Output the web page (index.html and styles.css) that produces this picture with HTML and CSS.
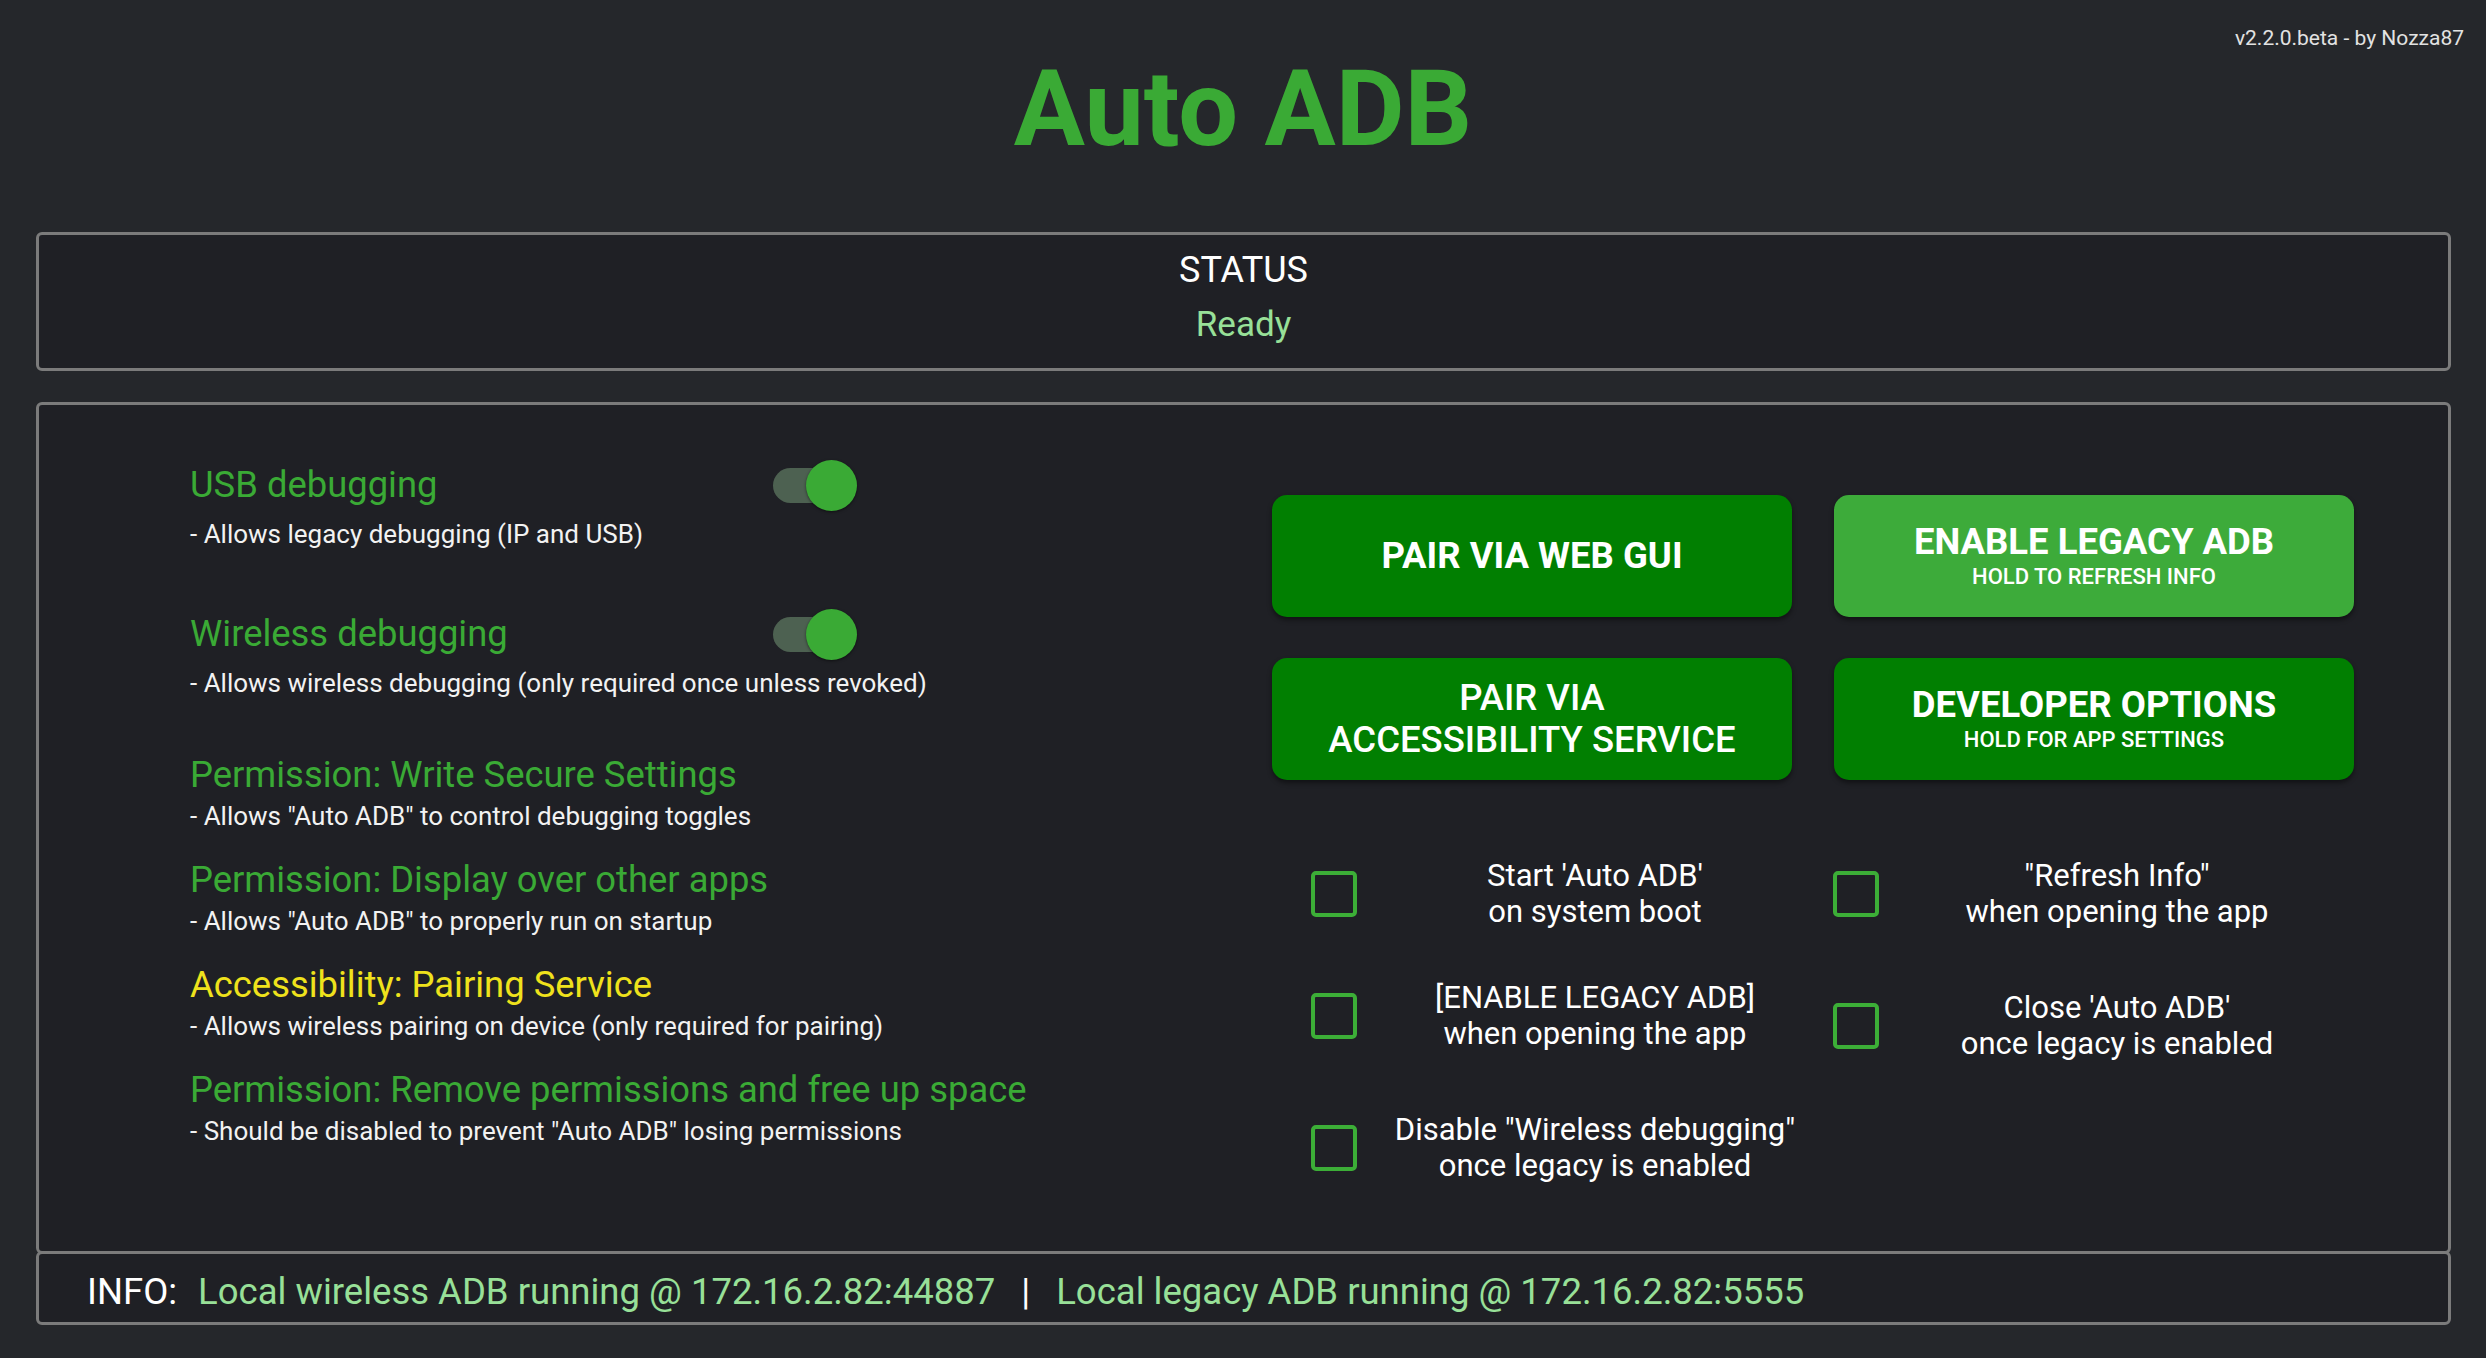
FILE: index.html
```html
<!DOCTYPE html>
<html lang="en">
<head>
<meta charset="utf-8">
<title>Auto ADB</title>
<link rel="stylesheet" href="styles.css">
</head>
<body>
<header class="header">
  <div class="version">v2.2.0.beta - by Nozza87</div>
  <h1 class="title">Auto ADB</h1>
</header>

<section class="status-box">
  <div class="status-label">STATUS</div>
  <div class="status-value">Ready</div>
</section>

<section class="panel">
  <div class="settings">
    <div class="setting setting--toggle">
      <div class="setting-row">
        <div class="setting-title">USB debugging</div>
        <div class="switch"><span class="switch-track"></span><span class="switch-thumb"></span></div>
      </div>
      <div class="setting-desc">- Allows legacy debugging (IP and USB)</div>
    </div>
    <div class="setting setting--toggle">
      <div class="setting-row">
        <div class="setting-title">Wireless debugging</div>
        <div class="switch"><span class="switch-track"></span><span class="switch-thumb"></span></div>
      </div>
      <div class="setting-desc">- Allows wireless debugging (only required once unless revoked)</div>
    </div>
    <div class="setting">
      <div class="setting-title">Permission: Write Secure Settings</div>
      <div class="setting-desc">- Allows "Auto ADB" to control debugging toggles</div>
    </div>
    <div class="setting">
      <div class="setting-title">Permission: Display over other apps</div>
      <div class="setting-desc">- Allows "Auto ADB" to properly run on startup</div>
    </div>
    <div class="setting">
      <div class="setting-title setting-title--warn">Accessibility: Pairing Service</div>
      <div class="setting-desc">- Allows wireless pairing on device (only required for pairing)</div>
    </div>
    <div class="setting">
      <div class="setting-title">Permission: Remove permissions and free up space</div>
      <div class="setting-desc">- Should be disabled to prevent "Auto ADB" losing permissions</div>
    </div>
  </div>

  <div class="actions">
    <div class="buttons">
      <div class="btn btn--dark"><span class="btn-main">PAIR VIA WEB GUI</span></div>
      <div class="btn btn--light"><span class="btn-main">ENABLE LEGACY ADB</span><span class="btn-sub">HOLD TO REFRESH INFO</span></div>
      <div class="btn btn--dark"><span class="btn-main btn-main--medium">PAIR VIA</span><span class="btn-main btn-main--medium">ACCESSIBILITY SERVICE</span></div>
      <div class="btn btn--dark"><span class="btn-main">DEVELOPER OPTIONS</span><span class="btn-sub">HOLD FOR APP SETTINGS</span></div>
    </div>

    <div class="checks">
      <div class="check">
        <span class="check-box"></span>
        <span class="check-text">Start 'Auto ADB'<br>on system boot</span>
      </div>
      <div class="check">
        <span class="check-box"></span>
        <span class="check-text">"Refresh Info"<br>when opening the app</span>
      </div>
      <div class="check check--top">
        <span class="check-box"></span>
        <span class="check-text">[ENABLE LEGACY ADB]<br>when opening the app</span>
      </div>
      <div class="check check--bottom">
        <span class="check-box"></span>
        <span class="check-text">Close 'Auto ADB'<br>once legacy is enabled</span>
      </div>
      <div class="check">
        <span class="check-box"></span>
        <span class="check-text">Disable "Wireless debugging"<br>once legacy is enabled</span>
      </div>
    </div>
  </div>
</section>

<footer class="info-bar">
  <span class="info-label">INFO:</span>
  <span class="info-text">Local wireless ADB running @ 172.16.2.82:44887</span>
  <span class="info-sep">|</span>
  <span class="info-text info-text--last">Local legacy ADB running @ 172.16.2.82:5555</span>
</footer>
</body>
</html>
```

FILE: styles.css
```css
html, body {
  margin: 0;
  padding: 0;
}

body {
  width: 2486px;
  height: 1358px;
  overflow: hidden;
  background: #25272b;
  color: #ffffff;
  font-family: Roboto, "Liberation Sans", sans-serif;
}

/* Header */
.header {
  display: flex;
  flex-direction: column;
}

.version {
  align-self: flex-end;
  padding: 25px 22px 0 0;
  font-size: 21px;
  line-height: 26px;
  color: #e2e2e2;
}

.title {
  margin: 4px 0 0;
  text-align: center;
  font-size: 106px;
  line-height: 108px;
  font-weight: 700;
  color: #3aaa35;
}

/* Status */
.status-box {
  margin: 69px 35px 0 36px;
  padding: 9px 0 17px;
  border: 3px solid #7b7b7b;
  border-radius: 6px;
  background: #1f2025;
  text-align: center;
}

.status-label {
  font-size: 36px;
  line-height: 52px;
  color: #ffffff;
}

.status-value {
  margin-top: 3px;
  font-size: 35px;
  line-height: 52px;
  color: #98e098;
}

/* Main panel */
.panel {
  display: flex;
  margin: 31px 35px 0 36px;
  border: 3px solid #7b7b7b;
  border-radius: 6px;
  background: #1f2025;
}

.settings {
  box-sizing: border-box;
  width: 1233px;
  padding: 48px 0 0 151px;
  display: flex;
  flex-direction: column;
}

.setting {
  margin-bottom: 23px;
}

.setting--toggle {
  margin-bottom: 51px;
}

.setting-row {
  display: flex;
  align-items: center;
  justify-content: space-between;
  width: 667px;
  height: 64px;
}

.setting-title {
  font-size: 36.4px;
  line-height: 48px;
  color: #3aaa35;
}

.setting-title--warn {
  color: #efe21c;
}

.setting-desc {
  font-size: 26px;
  line-height: 34px;
  color: #f2f2f2;
}

/* Switch */
.switch {
  position: relative;
  width: 84px;
  height: 51px;
}

.switch-track {
  position: absolute;
  left: 0;
  top: 8px;
  width: 72px;
  height: 35px;
  border-radius: 18px;
  background: #4d6151;
}

.switch-thumb {
  position: absolute;
  right: 0;
  top: 0;
  width: 51px;
  height: 51px;
  border-radius: 50%;
  background: #3aaa35;
  box-shadow: 0 1px 3px rgba(0, 0, 0, 0.5);
}

/* Actions */
.actions {
  flex: 1;
  padding: 90px 0 67px;
  display: flex;
  flex-direction: column;
}

.buttons {
  display: grid;
  grid-template-columns: 520px 520px;
  grid-auto-rows: 122px;
  column-gap: 42px;
  row-gap: 41px;
}

.btn {
  display: flex;
  flex-direction: column;
  align-items: center;
  justify-content: center;
  border-radius: 15px;
  color: #ffffff;
  text-align: center;
  box-shadow: 0 3px 5px rgba(0, 0, 0, 0.45);
}

.btn--dark {
  background: #017f01;
}

.btn--light {
  background: #3dab3a;
}

.btn-main {
  font-size: 36.5px;
  line-height: 42px;
  font-weight: 700;
}

.btn-main--medium {
  font-weight: 500;
  line-height: 42px;
}

.btn-sub {
  font-size: 22px;
  line-height: 28px;
  font-weight: 500;
}

/* Checkboxes */
.checks {
  margin-top: 78px;
  padding-left: 39px;
  display: grid;
  grid-template-columns: 522px 522px;
  grid-template-rows: 72px 82px 72px;
  row-gap: 50px;
}

.check {
  display: flex;
  align-items: center;
  height: 72px;
}

.check--top {
  align-self: start;
}

.check--bottom {
  align-self: end;
}

.check-box {
  box-sizing: border-box;
  width: 46px;
  height: 46px;
  border: 4px solid #3cae37;
  border-radius: 5px;
  flex: none;
}

.check-text {
  flex: 1;
  text-align: center;
  font-size: 31px;
  line-height: 36px;
  color: #ffffff;
}

/* Info bar */
.info-bar {
  display: flex;
  align-items: center;
  height: 60px;
  margin: -3px 35px 0 36px;
  padding: 8px 0 0 48px;
  border: 3px solid #7b7b7b;
  border-radius: 6px;
  background: #1f2025;
  font-size: 36.5px;
  line-height: 60px;
  white-space: nowrap;
}

.info-label {
  color: #ffffff;
}

.info-text {
  margin-left: 21px;
  color: #98e098;
}

.info-sep {
  margin-left: 26px;
  color: #ffffff;
}

.info-text--last {
  margin-left: 26px;
}
```
